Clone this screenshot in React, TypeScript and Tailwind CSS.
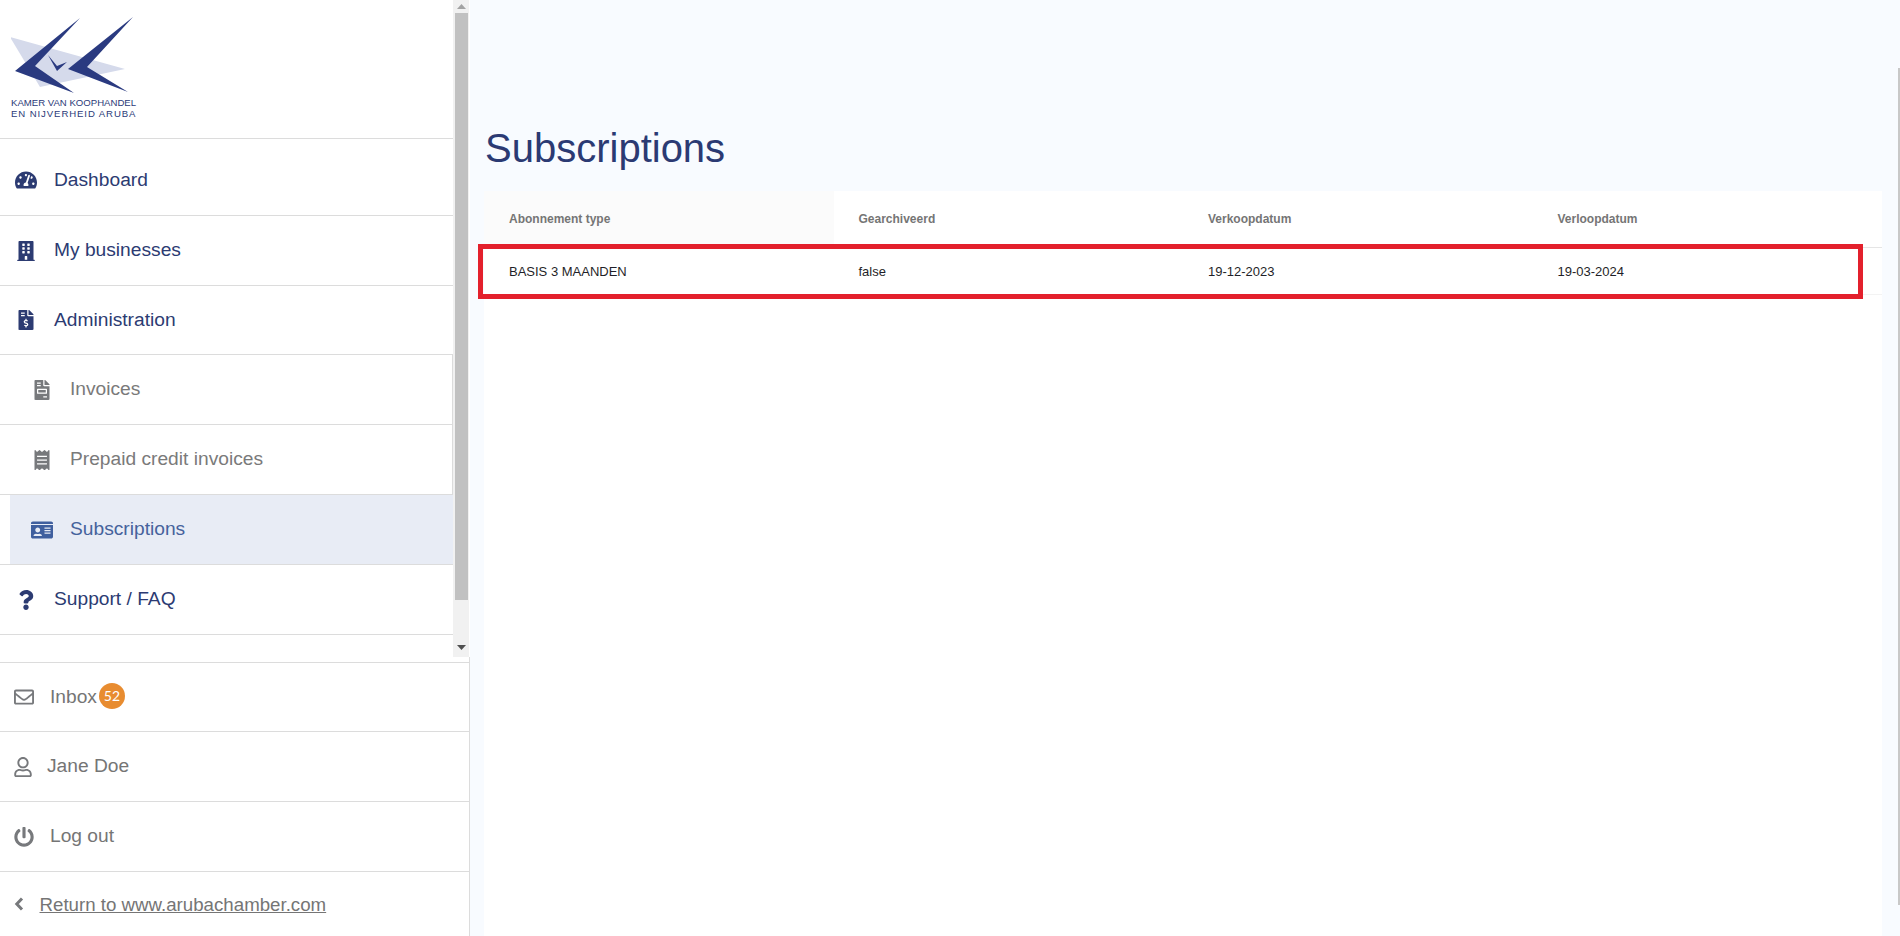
import React from "react";
import {
  FaTachometerAlt,
  FaBuilding,
  FaFileInvoiceDollar,
  FaFileInvoice,
  FaReceipt,
  FaIdCard,
  FaQuestion,
  FaRegEnvelope,
  FaRegUser,
  FaPowerOff,
} from "react-icons/fa";

function Logo() {
  return (
    <div className="h-[139px] border-b border-[#dcdcdc] pl-[11px] pt-[15px] shrink-0">
      <svg width="135" height="80" viewBox="11 15 135 80" className="block">
        <polygon points="10,37 125,69 40,87" fill="#d5daeb" />
        <polygon points="80,18 15,71 74,93 35,66" fill="#2a3a80" />
        <polygon points="133,17 68,69 128,92 87,67" fill="#2a3a80" />
        <polygon points="48,55 57,71 67,62 57,66" fill="#2a3a80" />
      </svg>
      <div className="text-[#2b3a78] text-[9.6px] leading-[11px] whitespace-nowrap mt-[2px]">KAMER VAN KOOPHANDEL</div>
      <div className="text-[#2b3a78] text-[9.6px] leading-[11px] tracking-[0.9px] whitespace-nowrap">EN NIJVERHEID ARUBA</div>
    </div>
  );
}

function MainRow({ icon, label, h = "h-[70px]" }: { icon: React.ReactNode; label: string; h?: string }) {
  return (
    <div className={`${h} flex items-center border-b border-[#dcdcdc] text-[#2c3b72] text-[19.2px]`}>
      <div className="w-[54px] flex justify-center pr-[2px] shrink-0">{icon}</div>
      <span>{label}</span>
    </div>
  );
}

function SubRow({ icon, label }: { icon: React.ReactNode; label: string }) {
  return (
    <div className="h-[70px] flex items-center border-b border-r border-[#dcdcdc] text-[#7a7a7a] text-[19.2px]">
      <div className="w-[70px] pl-[14px] flex justify-center shrink-0">{icon}</div>
      <span>{label}</span>
    </div>
  );
}

function ActiveRow() {
  return (
    <div className="h-[70px] flex items-center border-b border-[#dcdcdc]">
      <div className="h-full flex-1 ml-[10px] bg-[#e8ecf5] flex items-center text-[#45629c] text-[19.2px]">
        <div className="w-[60px] pl-[4px] flex justify-center shrink-0">
          <FaIdCard className="w-[22px] h-[22px] text-[#3f5f9e]" />
        </div>
        <span>Subscriptions</span>
      </div>
    </div>
  );
}

function Scrollbar() {
  return (
    <div className="w-[16px] h-[657px] bg-[#f1f1f1] shrink-0 flex flex-col items-center">
      <div className="h-[13px] flex items-center justify-center shrink-0">
        <svg width="9" height="5" viewBox="0 0 9 5"><polygon points="4.5,0 9,5 0,5" fill="#a3a3a3" /></svg>
      </div>
      <div className="w-[13px] h-[587px] bg-[#c1c1c1] shrink-0" />
      <div className="flex-1 flex items-end pb-[7px]">
        <svg width="9" height="5" viewBox="0 0 9 5"><polygon points="0,0 9,0 4.5,5" fill="#505050" /></svg>
      </div>
    </div>
  );
}

function BottomRow({ icon, children, pl, h = "h-[70px]", border = true }: { icon: React.ReactNode; children: React.ReactNode; pl: string; h?: string; border?: boolean }) {
  return (
    <div className={`${h} flex items-center text-[#757575] text-[19.2px] ${border ? "border-b border-[#dcdcdc]" : ""}`}>
      <div className={`${pl} pl-[14px] shrink-0 flex items-center`}>{icon}</div>
      {children}
    </div>
  );
}

function Sidebar() {
  return (
    <aside className="w-[470px] h-[936px] bg-white shrink-0 flex flex-col">
      <div className="flex h-[657px] shrink-0 pr-[1px]">
        <div className="flex-1 min-w-0 flex flex-col">
          <Logo />
          <div className="h-[6px] shrink-0" />
          <MainRow icon={<FaTachometerAlt className="w-[22px] h-[20px]" />} label="Dashboard" h="h-[71px]" />
          <MainRow icon={<FaBuilding className="w-[20px] h-[20px]" />} label="My businesses" />
          <MainRow icon={<FaFileInvoiceDollar className="w-[20px] h-[20px]" />} label="Administration" h="h-[69px]" />
          <SubRow icon={<FaFileInvoice className="w-[20px] h-[20px] text-[#77797c]" />} label="Invoices" />
          <SubRow icon={<FaReceipt className="w-[20px] h-[20px] text-[#77797c]" />} label="Prepaid credit invoices" />
          <ActiveRow />
          <MainRow icon={<FaQuestion className="w-[20px] h-[20px]" />} label="Support / FAQ" />
        </div>
        <Scrollbar />
      </div>
      <div className="flex-1 flex flex-col border-r border-[#dcdcdc]">
        <div className="h-[6px] border-b border-[#dcdcdc] shrink-0" />
        <BottomRow pl="w-[50px]" h="h-[69px]" icon={<FaRegEnvelope className="w-[20px] h-[20px] text-[#77797c]" />}>
          <span>Inbox</span>
          <span className="ml-[2px] w-[26px] h-[26px] rounded-full bg-[#e88c30] text-white text-[14px] pb-[1px] flex items-center justify-center font-['Lato',sans-serif] -mt-[2px]">52</span>
        </BottomRow>
        <BottomRow pl="w-[47px]" icon={<FaRegUser className="w-[18px] h-[20px] text-[#77797c]" />}>
          <span>Jane Doe</span>
        </BottomRow>
        <BottomRow pl="w-[50px]" icon={<FaPowerOff className="w-[20px] h-[20px] text-[#77797c]" />}>
          <span>Log out</span>
        </BottomRow>
        <BottomRow
          pl="w-[39.5px]"
          h="flex-1"
          border={false}
          icon={
            <svg width="10" height="14" viewBox="0 0 10 14" className="-mt-[1px]">
              <polyline points="8,1.5 2.8,7 8,12.5" fill="none" stroke="#77797c" strokeWidth="3" />
            </svg>
          }
        >
          <span className="underline text-[18.7px] mt-[2px]">Return to www.arubachamber.com</span>
        </BottomRow>
      </div>
    </aside>
  );
}

const headers = ["Abonnement type", "Gearchiveerd", "Verkoopdatum", "Verloopdatum"];
const cells = ["BASIS 3 MAANDEN", "false", "19-12-2023", "19-03-2024"];

function Table() {
  return (
    <div className="flex-1 bg-white min-h-0">
      <div className="grid grid-cols-4 h-[57px] border-b border-[#e5e5e5]">
        {headers.map((h, i) => (
          <div key={h} className={`flex items-center pl-[25px] text-[12px] font-bold text-[#757575] ${i === 0 ? "bg-[#fbfbfb]" : ""}`}>
            {h}
          </div>
        ))}
      </div>
      <div className="relative grid grid-cols-4 h-[47px] border-b border-[#f3f3f3]">
        {cells.map((c) => (
          <div key={c} className="flex items-center pl-[25px] pt-[2px] text-[13px] text-[#1f1f28]">
            {c}
          </div>
        ))}
        <div className="absolute left-[-6px] right-[19px] top-[-4px] bottom-[-5px] border-[5px] border-[#e3202c]" />
      </div>
    </div>
  );
}

export default function App() {
  return (
    <div className="flex w-[1900px] h-[936px] overflow-hidden bg-[#f8fbff] font-['Liberation_Sans',Arial,sans-serif]">
      <Sidebar />
      <main className="flex-1 min-w-0 flex flex-col pl-[14px] pr-[16px]">
        <h1 className="h-[191px] pt-[123px] pl-[1px] text-[40px] leading-[50px] text-[#2b3a73] shrink-0">Subscriptions</h1>
        <Table />
      </main>
      <div className="w-[2px] shrink-0 pt-[68px] flex flex-col">
        <div className="h-[837px] bg-[#c8c8c8]" />
      </div>
    </div>
  );
}
